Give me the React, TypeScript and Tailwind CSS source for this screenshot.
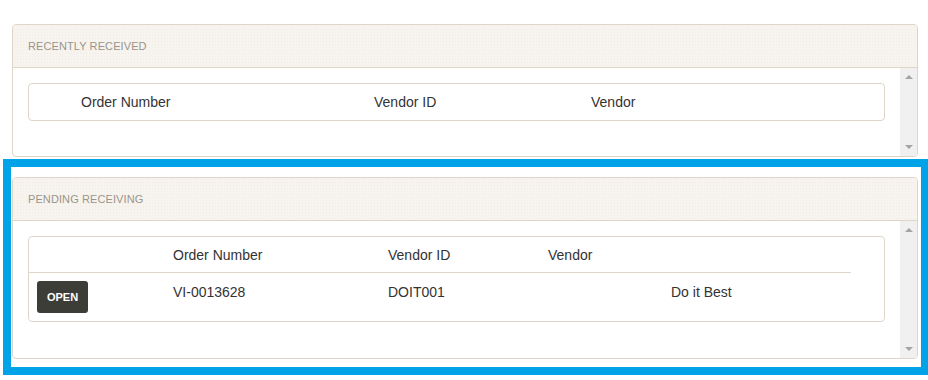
import React from "react";

const font = { fontFamily: '"Liberation Sans", Arial, sans-serif' };

function Scrollbar({ height }: { height: string }) {
  return (
    <div className={`w-[17px] ${height} bg-[#f0f0f0] flex flex-col items-center justify-between py-[7px]`}>
      <div className="w-0 h-0 border-l-[4px] border-r-[4px] border-b-[4px] border-l-transparent border-r-transparent border-b-[#a3a3a3]" />
      <div className="w-0 h-0 border-l-[4px] border-r-[4px] border-t-[4px] border-l-transparent border-r-transparent border-t-[#a3a3a3]" />
    </div>
  );
}

function Panel({
  title,
  bodyHeight,
  children,
}: {
  title: string;
  bodyHeight: string;
  children: React.ReactNode;
}) {
  return (
    <div className="w-[906px] border border-[#ddd5c8] rounded-[4px] overflow-hidden bg-white">
      {/* Header */}
      <div className="h-[43px] border-b border-[#ddd5c8] bg-[#f7f4ef] bg-[radial-gradient(#f0ebe2_0.6px,transparent_0.8px)] bg-[length:3px_3px] flex items-center pl-[15px]">
        <span className="text-[11px] uppercase text-[#9a958c] tracking-[0.1px]">{title}</span>
      </div>
      {/* Body */}
      <div className="flex">
        <div className={`flex-1 ${bodyHeight} pt-[15px] px-[15px]`}>{children}</div>
        <Scrollbar height={bodyHeight} />
      </div>
    </div>
  );
}

export default function App() {
  return (
    <div className="min-h-screen bg-white overflow-hidden pt-[24px] text-[14px] text-[#333]" style={font}>
      {/* Recently received */}
      <div className="ml-[12px]">
        <Panel title="Recently Received" bodyHeight="h-[88px]">
          <div className="border border-[#ddd5c8] rounded-[4px] flex h-[38px] items-center pt-px">
            <div className="w-[44px]" />
            <div className="w-[293px] pl-2">Order Number</div>
            <div className="w-[217px] pl-2">Vendor ID</div>
            <div className="flex-1 pl-2">Vendor</div>
          </div>
        </Panel>
      </div>

      {/* Pending receiving (highlighted) */}
      <div className="mt-[2px] ml-[3px] w-[926px] border-[8px] border-[#00a3e8] pt-[10px] pb-[8px] bg-white">
        <div className="ml-[1px]">
          <Panel title="Pending Receiving" bodyHeight="h-[137px]">
            <div className="border border-[#ddd5c8] rounded-[4px]">
              <div className="flex h-[36px] items-center pt-[2px] border-b border-[#ddd5c8] w-[822px]">
                <div className="w-[136px]" />
                <div className="w-[215px] pl-2">Order Number</div>
                <div className="w-[160px] pl-2">Vendor ID</div>
                <div className="flex-1 pl-2">Vendor</div>
              </div>
              <div className="flex h-[48px] items-start pt-2 leading-[20px]">
                <div className="w-[136px] pl-2">
                  <button className="w-[51px] h-[32px] rounded-[3px] bg-[#3d3d38] text-white text-[11px] font-bold">
                    OPEN
                  </button>
                </div>
                <div className="w-[215px] pl-2 pt-px">VI-0013628</div>
                <div className="w-[160px] pl-2 pt-px">DOIT001</div>
                <div className="w-[123px] pl-2" />
                <div className="flex-1 pl-2 pt-px">Do it Best</div>
              </div>
            </div>
          </Panel>
        </div>
      </div>
    </div>
  );
}
